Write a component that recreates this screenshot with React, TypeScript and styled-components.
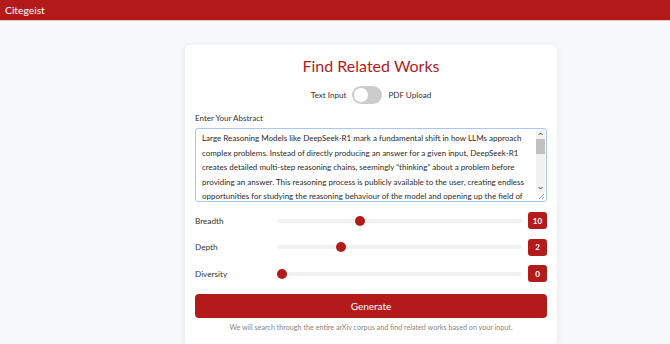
import React from 'react';
import styled, { createGlobalStyle } from 'styled-components';

const RED = '#b31b1b';
const FONT = "Lato, 'Noto Sans', sans-serif";

const GlobalStyle = createGlobalStyle`
  html, body {
    margin: 0;
    padding: 0;
    background: #f7f8fa;
    font-family: ${FONT};
  }
`;

const Header = styled.header`
  height: 20px;
  background: ${RED};
  color: #fff;
  display: flex;
  align-items: center;
  padding: 0 5px;
  font-size: 10.3px;
  border-bottom: 1px solid #e9c9c9;
`;

const Main = styled.main`
  display: flex;
  justify-content: center;
  padding: 24px 0 0 72px;
`;

const Card = styled.section`
  width: 352px;
  background: #fff;
  border-radius: 5px;
  box-shadow: 0 1px 6px rgba(0, 0, 0, 0.08);
  padding: 7px 10px 14px;
  display: flex;
  flex-direction: column;
`;

const Title = styled.h1`
  margin: 0;
  text-align: center;
  color: ${RED};
  font-weight: 400;
  font-size: 16px;
  line-height: 28px;
`;

const ToggleRow = styled.div`
  display: flex;
  justify-content: center;
  align-items: center;
  gap: 6px;
  margin-top: 6px;
  font-size: 8.1px;
  color: #333;
`;

const Switch = styled.span`
  position: relative;
  width: 30px;
  height: 18px;
  border-radius: 9px;
  background: #ccc;

  &::after {
    content: '';
    position: absolute;
    top: 2px;
    left: 2px;
    width: 14px;
    height: 14px;
    border-radius: 50%;
    background: #fff;
  }
`;

const Label = styled.label`
  display: block;
  margin-top: 9px;
  font-size: 8px;
  line-height: 11px;
  color: #333;
`;

const AbstractBox = styled.div`
  position: relative;
  margin-top: 4px;
`;

const Abstract = styled.textarea`
  box-sizing: border-box;
  display: block;
  width: 100%;
  height: 74px;
  padding: 2px 16px 2px 6px;
  border: 1.5px solid #a8c8f4;
  border-radius: 3px;
  outline: none;
  resize: none;
  overflow: hidden;
  font-family: ${FONT};
  font-size: 8px;
  line-height: 14.5px;
  color: #2b2b2b;
`;

const Scrollbar = styled.div`
  position: absolute;
  top: 2px;
  right: 2px;
  bottom: 10px;
  width: 9px;
  background: #f1f1f1;
  display: flex;
  flex-direction: column;
  align-items: center;
  justify-content: space-between;
`;

const ScrollThumb = styled.span`
  position: absolute;
  top: 9px;
  left: 0;
  width: 9px;
  height: 15px;
  background: #c1c1c1;
`;

const Grip = styled.svg`
  position: absolute;
  right: 2px;
  bottom: 2px;
`;

const Sliders = styled.div`
  display: flex;
  flex-direction: column;
  gap: 9.5px;
  margin-top: 10px;
`;

const SliderRow = styled.div`
  display: flex;
  align-items: center;
  height: 17px;
`;

const SliderLabel = styled.span`
  width: 82px;
  font-size: 8.2px;
  color: #333;
`;

const Track = styled.div`
  position: relative;
  flex: 1;
  height: 4px;
  margin-right: 6px;
  border-radius: 2px;
  background: #f1f1f1;
`;

const Thumb = styled.span`
  position: absolute;
  top: 50%;
  width: 10px;
  height: 10px;
  border-radius: 50%;
  background: ${RED};
  transform: translate(-50%, -50%);
`;

const Value = styled.span`
  width: 19px;
  height: 17px;
  display: flex;
  align-items: center;
  justify-content: center;
  background: ${RED};
  color: #fff;
  border-radius: 3px;
  font-size: 8px;
  font-weight: 700;
`;

const GenerateButton = styled.button`
  margin-top: 12px;
  height: 24px;
  border: none;
  border-radius: 4px;
  background: ${RED};
  color: #fff;
  font-family: ${FONT};
  font-size: 10px;
`;

const Note = styled.p`
  margin: 5px 0 0;
  text-align: center;
  font-size: 7.2px;
  color: #888;
`;

const ABSTRACT =
  'Large Reasoning Models like DeepSeek-R1 mark a fundamental shift in how LLMs approach complex problems. Instead of directly producing an answer for a given input, DeepSeek-R1 creates detailed multi-step reasoning chains, seemingly \u201cthinking\u201d about a problem before providing an answer. This reasoning process is publicly available to the user, creating endless opportunities for studying the reasoning behaviour of the model and opening up the field of Thoughtology. Starting from a taxonomy of DeepSeek-R1\u2019s basic building blocks of reasoning, our analyses on DeepSeek-R1 investigate the impact and controllability of thought length, management of long or confusing contexts, cultural and safety concerns, and the status of DeepSeek-R1 vis-\u00e0-vis cognitive phenomena.';

const sliders = [
  { label: 'Breadth', value: 10, min: 0, max: 30 },
  { label: 'Depth', value: 2, min: 0, max: 8 },
  { label: 'Diversity', value: 0, min: 0, max: 1 },
];

function Slider({ value, min, max }: { value: number; min: number; max: number }) {
  const pct = (value - min) / (max - min);
  return (
    <Track>
      <Thumb style={{ left: `calc(5px + (100% - 10px) * ${pct})` }} />
    </Track>
  );
}

function Chevron({ up }: { up?: boolean }) {
  return (
    <svg width="9" height="8" viewBox="0 0 9 8">
      <path d={up ? 'M2.5 5 L4.5 3 L6.5 5' : 'M2.5 3 L4.5 5 L6.5 3'} fill="none" stroke="#555" strokeWidth="1" />
    </svg>
  );
}

export default function App() {
  return (
    <>
      <GlobalStyle />
      <Header>Citegeist</Header>
      <Main>
        <Card>
          <Title>Find Related Works</Title>
          <ToggleRow>
            <span>Text Input</span>
            <Switch />
            <span>PDF Upload</span>
          </ToggleRow>
          <Label>Enter Your Abstract</Label>
          <AbstractBox>
            <Abstract defaultValue={ABSTRACT} spellCheck={false} />
            <Scrollbar>
              <Chevron up />
              <ScrollThumb />
              <Chevron />
            </Scrollbar>
            <Grip width="7" height="7" viewBox="0 0 7 7">
              <path d="M6 1 L1 6 M6 4 L4 6" stroke="#999" strokeWidth="1" />
            </Grip>
          </AbstractBox>
          <Sliders>
            {sliders.map(s => (
              <SliderRow key={s.label}>
                <SliderLabel>{s.label}</SliderLabel>
                <Slider value={s.value} min={s.min} max={s.max} />
                <Value>{s.value}</Value>
              </SliderRow>
            ))}
          </Sliders>
          <GenerateButton>Generate</GenerateButton>
          <Note>We will search through the entire arXiv corpus and find related works based on your input.</Note>
        </Card>
      </Main>
    </>
  );
}
